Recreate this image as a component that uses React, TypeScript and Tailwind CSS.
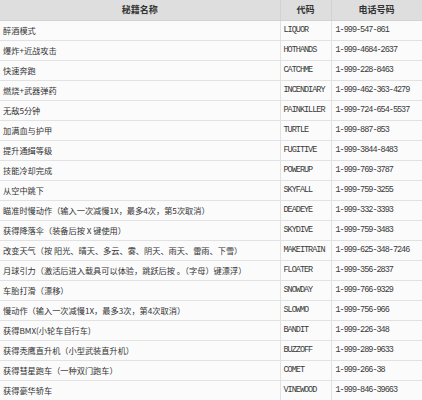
import React from "react";

interface CheatRow {
  name: string;
  code: string;
  phone: string;
}

const rows: CheatRow[] = [
  { name: "醉酒模式", code: "LIQUOR", phone: "1-999-547-861" },
  { name: "爆炸+近战攻击", code: "HOTHANDS", phone: "1-999-4684-2637" },
  { name: "快速奔跑", code: "CATCHME", phone: "1-999-228-8463" },
  { name: "燃烧+武器弹药", code: "INCENDIARY", phone: "1-999-462-363-4279" },
  { name: "无敌5分钟", code: "PAINKILLER", phone: "1-999-724-654-5537" },
  { name: "加满血与护甲", code: "TURTLE", phone: "1-999-887-853" },
  { name: "提升通缉等级", code: "FUGITIVE", phone: "1-999-3844-8483" },
  { name: "技能冷却完成", code: "POWERUP", phone: "1-999-769-3787" },
  { name: "从空中跳下", code: "SKYFALL", phone: "1-999-759-3255" },
  {
    name: "瞄准时慢动作（输入一次减慢1X，最多4次，第5次取消）",
    code: "DEADEYE",
    phone: "1-999-332-3393",
  },
  { name: "获得降落伞（装备后按 X 键使用）", code: "SKYDIVE", phone: "1-999-759-3483" },
  {
    name: "改变天气（按 阳光、晴天、多云、雾、阴天、雨天、雷雨、下雪）",
    code: "MAKEITRAIN",
    phone: "1-999-625-348-7246",
  },
  {
    name: "月球引力（激活后进入载具可以体验，跳跃后按 。（字母）键漂浮）",
    code: "FLOATER",
    phone: "1-999-356-2837",
  },
  { name: "车胎打滑（漂移）", code: "SNOWDAY", phone: "1-999-766-9329" },
  {
    name: "慢动作（输入一次减慢1X，最多3次，第4次取消）",
    code: "SLOWMO",
    phone: "1-999-756-966",
  },
  { name: "获得BMX(小轮车自行车)", code: "BANDIT", phone: "1-999-226-348" },
  { name: "获得秃鹰直升机（小型武装直升机）", code: "BUZZOFF", phone: "1-999-289-9633" },
  { name: "获得彗星跑车（一种双门跑车）", code: "COMET", phone: "1-999-266-38" },
  { name: "获得豪华轿车", code: "VINEWOOD", phone: "1-999-846-39663" },
];

const cjk = "font-['Noto_Sans_CJK_SC',sans-serif]";
const mono = "font-['Liberation_Mono',monospace] text-[8.5px] tracking-[-1px] text-[#3a3a3a]";

export default function App() {
  return (
    <div className="w-[422px] h-[400px] overflow-hidden bg-white">
      <table className="w-[422px] table-fixed border-collapse text-[#333]">
        <colgroup>
          <col className="w-[280px]" />
          <col className="w-[51px]" />
          <col className="w-[91px]" />
        </colgroup>
        <thead>
          <tr className="h-[20px] bg-[#dedede]">
            <th className={`${cjk} text-[9px] font-bold text-center border-r border-b border-[#d2d2d2] p-0`}>
              秘籍名称
            </th>
            <th className={`${cjk} text-[9px] font-bold text-center border-r border-b border-[#d2d2d2] p-0`}>
              代码
            </th>
            <th className={`${cjk} text-[9px] font-bold text-center border-r border-b border-[#d2d2d2] p-0`}>
              电话号码
            </th>
          </tr>
        </thead>
        <tbody>
          {rows.map((row) => (
            <tr key={row.code} className="h-[20px] bg-[#fbfbfb]">
              <td
                className={`${cjk} text-[8.2px] leading-none whitespace-nowrap overflow-hidden pl-[3px] pr-0 py-0 border-r border-b border-[#e2e2e2]`}
              >
                {row.name}
              </td>
              <td className={`${mono} whitespace-nowrap overflow-hidden pl-[3px] py-0 border-r border-b border-[#e2e2e2]`}>
                {row.code}
              </td>
              <td className={`${mono} whitespace-nowrap overflow-hidden pl-[4px] py-0 border-r border-b border-[#e2e2e2]`}>
                {row.phone}
              </td>
            </tr>
          ))}
        </tbody>
      </table>
    </div>
  );
}
